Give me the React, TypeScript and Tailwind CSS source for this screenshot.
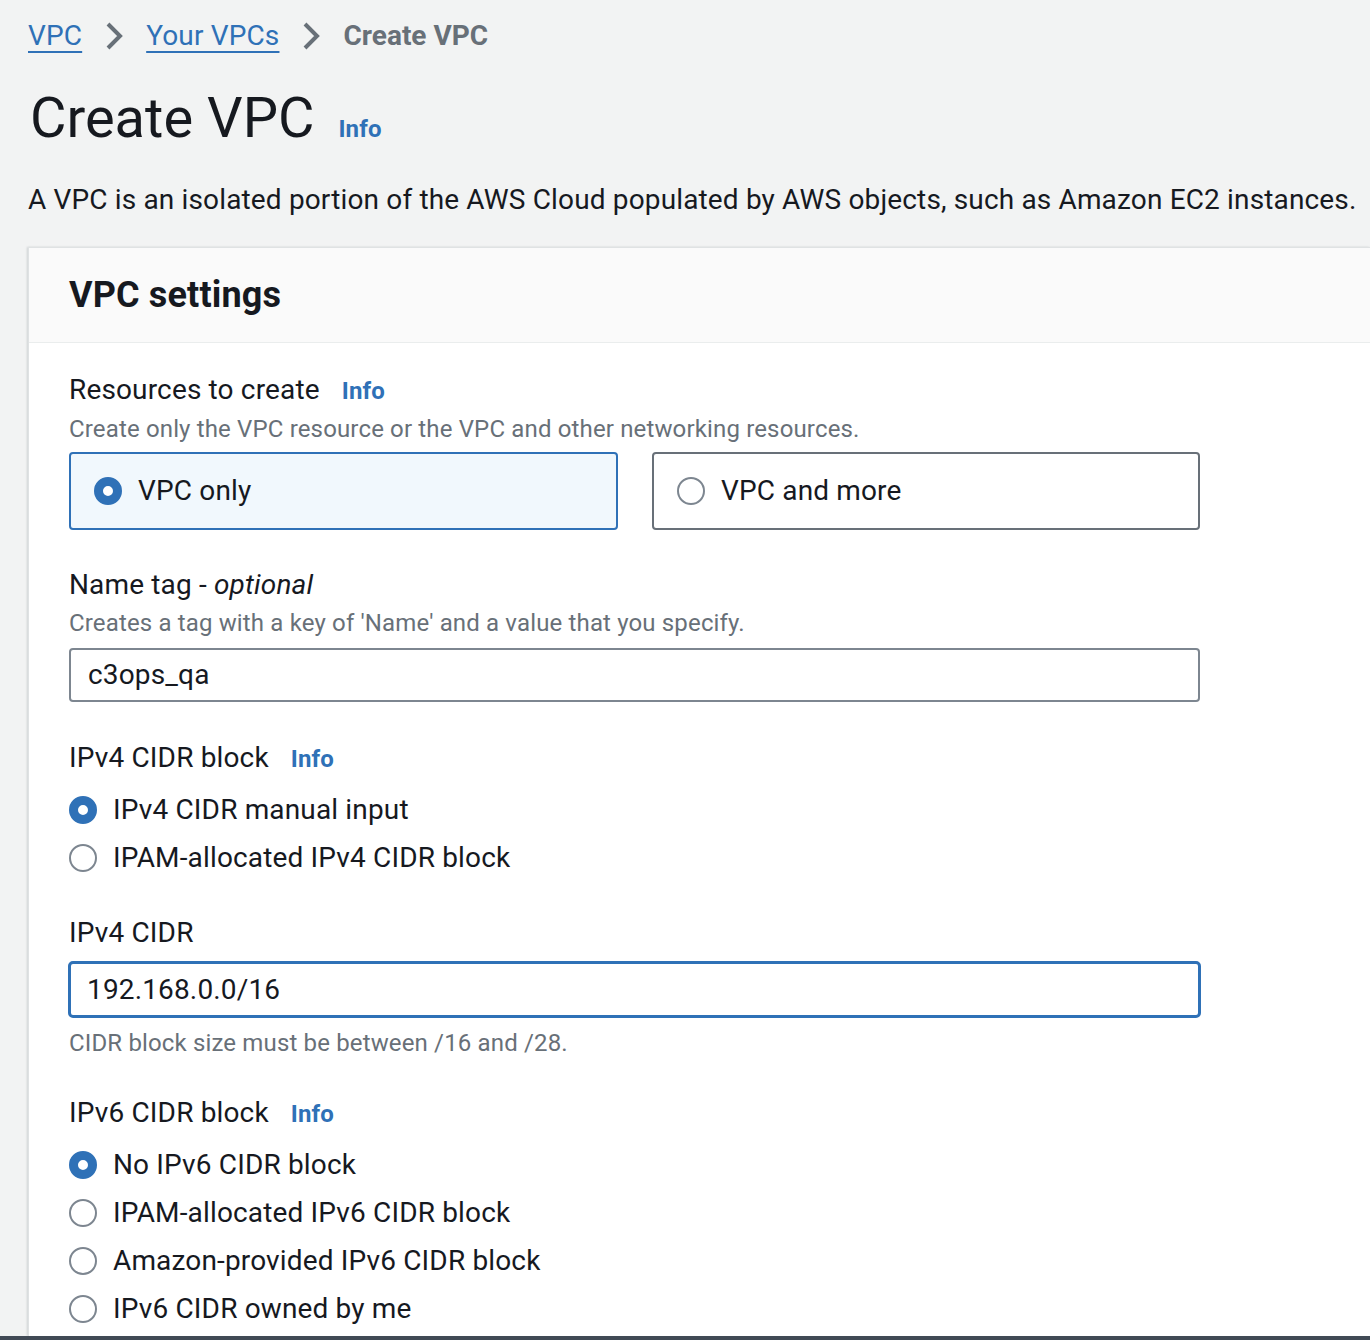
import React from 'react'

function Chevron() {
  return (
    <svg width="18" height="30" viewBox="0 0 18 30" className="shrink-0">
      <path d="M3 3 L15 15 L3 27" fill="none" stroke="#687078" strokeWidth="4" />
    </svg>
  )
}

function Radio({ checked }: { checked?: boolean }) {
  return checked ? (
    <span className="block w-[28px] h-[28px] rounded-full border-[9px] border-[#2f71b7] bg-white shrink-0" />
  ) : (
    <span className="block w-[28px] h-[28px] rounded-full border-[2px] border-[#7d8690] bg-white shrink-0" />
  )
}

function Label({ children, info, className = '' }: { children: React.ReactNode; info?: boolean; className?: string }) {
  return (
    <div className={`flex items-baseline text-[28px] leading-[40px] text-[#16191f] ${className}`}>
      <span>{children}</span>
      {info && <span className="ml-[22px] text-[24px] font-bold text-[#2f71b7]">Info</span>}
    </div>
  )
}

function Desc({ children, className = '' }: { children: React.ReactNode; className?: string }) {
  return <div className={`text-[24px] leading-[36px] text-[#687078] ${className}`}>{children}</div>
}

function RadioRow({ label, checked }: { label: string; checked?: boolean }) {
  return (
    <div className="flex items-center h-[48px] gap-[16px] text-[28px] text-[#16191f]">
      <Radio checked={checked} />
      <span>{label}</span>
    </div>
  )
}

export default function App() {
  return (
    <div
      className="h-[1340px] overflow-hidden bg-[#f2f3f3] flex flex-col tracking-[0.15px]"
      style={{ fontFamily: 'Roboto, "Liberation Sans", sans-serif' }}
    >
      {/* Breadcrumbs */}
      <div className="flex items-center h-[40px] mt-[16px] pl-[28px] gap-[23px] text-[28px]">
        <span className="text-[#2f71b7] underline decoration-2 underline-offset-[6px]">VPC</span>
        <Chevron />
        <span className="text-[#2f71b7] underline decoration-2 underline-offset-[6px]">Your VPCs</span>
        <Chevron />
        <span className="text-[#687078] font-bold tracking-normal">Create VPC</span>
      </div>

      {/* Header */}
      <div className="flex items-baseline mt-[30px] pl-[30px] h-[64px]">
        <h1 className="text-[56px] leading-[64px] text-[#16191f] tracking-normal">Create VPC</h1>
        <span className="ml-[24px] text-[24px] font-bold text-[#2f71b7]">Info</span>
      </div>
      <p className="mt-[30px] pl-[28px] text-[28px] leading-[40px] text-[#16191f] whitespace-nowrap">
        A VPC is an isolated portion of the AWS Cloud populated by AWS objects, such as Amazon EC2 instances.
      </p>

      {/* Panel */}
      <div className="mt-[27px] ml-[28px] flex-1 bg-white border-t border-l border-[#dfe2e3] shadow-[-1px_0_2px_rgba(0,28,36,0.15)]">
        <div className="h-[95px] flex items-center px-[40px] bg-[#fafafa] border-b border-[#eaeded]">
          <h2 className="text-[36px] font-bold text-[#16191f]">VPC settings</h2>
        </div>

        <div className="px-[40px] pt-[27px]">
          <Label info>Resources to create</Label>
          <Desc>Create only the VPC resource or the VPC and other networking resources.</Desc>
          <div className="flex gap-[34px] mt-[5px]">
            <div className="w-[549px] h-[78px] flex items-center gap-[16px] pl-[23px] rounded-[4px] border-2 border-[#2f71b7] bg-[#f1f8fd] text-[28px] text-[#16191f]">
              <Radio checked />
              <span>VPC only</span>
            </div>
            <div className="w-[548px] h-[78px] flex items-center gap-[16px] pl-[23px] rounded-[4px] border-2 border-[#687078] bg-white text-[28px] text-[#16191f]">
              <Radio />
              <span>VPC and more</span>
            </div>
          </div>

          <Label className="mt-[35px]">
            Name tag - <i>optional</i>
          </Label>
          <Desc>Creates a tag with a key of 'Name' and a value that you specify.</Desc>
          <div className="mt-[7px] w-[1131px] h-[54px] flex items-center px-[17px] rounded-[4px] border-2 border-[#7d8690] text-[28px] text-[#16191f]">
            c3ops_qa
          </div>

          <Label info className="mt-[36px]">IPv4 CIDR block</Label>
          <div className="mt-[7px]">
            <RadioRow checked label="IPv4 CIDR manual input" />
            <RadioRow label="IPAM-allocated IPv4 CIDR block" />
          </div>

          <Label className="mt-[31px]">IPv4 CIDR</Label>
          <div className="mt-[8px] w-[1133px] h-[57px] flex items-center px-[16px] rounded-[5px] border-[3px] border-[#2f71b7] text-[28px] text-[#16191f] -ml-px">
            192.168.0.0/16
          </div>
          <Desc className="mt-[7px]">CIDR block size must be between /16 and /28.</Desc>

          <Label info className="mt-[32px]">IPv6 CIDR block</Label>
          <div className="mt-[7px]">
            <RadioRow checked label="No IPv6 CIDR block" />
            <RadioRow label="IPAM-allocated IPv6 CIDR block" />
            <RadioRow label="Amazon-provided IPv6 CIDR block" />
            <RadioRow label="IPv6 CIDR owned by me" />
          </div>
        </div>
      </div>
      <div className="h-[4px] bg-[#414a55] shrink-0" />
    </div>
  )
}
